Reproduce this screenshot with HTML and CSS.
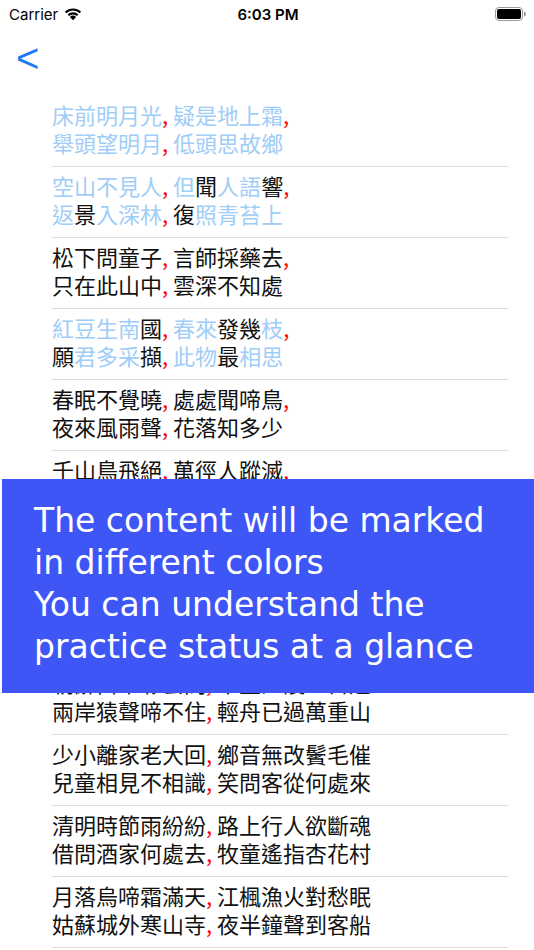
FILE: index.html
```html
<!DOCTYPE html>
<html>
<head>
<meta charset="utf-8">
<link rel="stylesheet" href="styles.css">
</head>
<body>
<div class="screen">
  <div class="status">
    <div class="status-left">
      <span class="carrier">Carrier</span>
      <svg class="wifi" width="20" height="15" viewBox="0 0 20 15">
        <path d="M10 14.2 L6.9 10.9 A4.6 4.6 0 0 1 13.1 10.9 Z" fill="#000"/>
        <path d="M4.6 8.5 A7.8 7.8 0 0 1 15.4 8.5 L13.9 10 A5.7 5.7 0 0 0 6.1 10 Z" fill="#000"/>
        <path d="M1.9 5.7 A11.6 11.6 0 0 1 18.1 5.7 L16.6 7.3 A9.4 9.4 0 0 0 3.4 7.3 Z" fill="#000"/>
      </svg>
    </div>
    <div class="time">6:03 PM</div>
    <div class="status-right">
      <svg class="battery" width="32" height="14" viewBox="0 0 32 14">
        <rect x="0.5" y="0.5" width="27" height="13" rx="3.5" fill="none" stroke="#9a9a9a"/>
        <rect x="2" y="2" width="24" height="10" rx="2" fill="#000"/>
        <path d="M29 4.5 A2 2.5 0 0 1 29 9.5 Z" fill="#9a9a9a"/>
      </svg>
    </div>
  </div>
  <div class="nav"><span class="back">&lt;</span></div>
  <div class="list">
    <div class="row">
      <div class="line"><span class="b">床前明月光</span><span class="c">,</span> <span class="b">疑是地上霜</span><span class="c">,</span></div>
      <div class="line"><span class="b">舉頭望明月</span><span class="c">,</span> <span class="b">低頭思故鄉</span></div>
    </div>
    <div class="row">
      <div class="line"><span class="b">空山不見人</span><span class="c">,</span> <span class="b">但</span>聞<span class="b">人語</span>響<span class="c">,</span></div>
      <div class="line"><span class="b">返</span>景<span class="b">入深林</span><span class="c">,</span> 復<span class="b">照青苔上</span></div>
    </div>
    <div class="row">
      <div class="line">松下問童子<span class="c">,</span> 言師採藥去<span class="c">,</span></div>
      <div class="line">只在此山中<span class="c">,</span> 雲深不知處</div>
    </div>
    <div class="row">
      <div class="line"><span class="b">紅豆生南</span>國<span class="c">,</span> <span class="b">春來</span>發幾<span class="b">枝</span><span class="c">,</span></div>
      <div class="line">願<span class="b">君多采</span>擷<span class="c">,</span> <span class="b">此物</span>最<span class="b">相思</span></div>
    </div>
    <div class="row">
      <div class="line">春眠不覺曉<span class="c">,</span> 處處聞啼鳥<span class="c">,</span></div>
      <div class="line">夜來風雨聲<span class="c">,</span> 花落知多少</div>
    </div>
    <div class="row">
      <div class="line">千山鳥飛絕<span class="c">,</span> 萬徑人蹤滅<span class="c">,</span></div>
      <div class="line">孤舟蓑笠翁<span class="c">,</span> 獨釣寒江雪</div>
    </div>
    <div class="row">
      <div class="line">白日依山盡<span class="c">,</span> 黃河入海流<span class="c">,</span></div>
      <div class="line">欲窮千里目<span class="c">,</span> 更上一層樓</div>
    </div>
    <div class="row">
      <div class="line">獨在異鄉為異客<span class="c">,</span> 每逢佳節倍思親</div>
      <div class="line">遙知兄弟登高處<span class="c">,</span> 遍插茱萸少一人</div>
    </div>
    <div class="row">
      <div class="line">朝辭白帝彩雲間<span class="c">,</span> 千里江陵一日還</div>
      <div class="line">兩岸猿聲啼不住<span class="c">,</span> 輕舟已過萬重山</div>
    </div>
    <div class="row">
      <div class="line">少小離家老大回<span class="c">,</span> 鄉音無改鬢毛催</div>
      <div class="line">兒童相見不相識<span class="c">,</span> 笑問客從何處來</div>
    </div>
    <div class="row">
      <div class="line">清明時節雨紛紛<span class="c">,</span> 路上行人欲斷魂</div>
      <div class="line">借問酒家何處去<span class="c">,</span> 牧童遙指杏花村</div>
    </div>
    <div class="row">
      <div class="line">月落烏啼霜滿天<span class="c">,</span> 江楓漁火對愁眠</div>
      <div class="line">姑蘇城外寒山寺<span class="c">,</span> 夜半鐘聲到客船</div>
    </div>
  </div>
  <div class="overlay">
    <p class="overlay-text">The content will be marked<br>in different colors<br>You can understand the<br>practice status at a glance</p>
  </div>
</div>
</body>
</html>
```

FILE: styles.css
```css
html, body {
  margin: 0;
  padding: 0;
  background: #fff;
}
.screen {
  position: relative;
  width: 534px;
  height: 950px;
  overflow: hidden;
  font-family: "Noto Sans CJK TC", "Noto Sans", sans-serif;
}
.status {
  height: 28px;
  display: flex;
  align-items: center;
  justify-content: space-between;
  padding: 0 7px 0 9px;
  font-family: "Inter", "Liberation Sans", sans-serif;
  font-size: 15px;
  color: #000;
}
.status-left {
  display: flex;
  align-items: center;
  gap: 5px;
  width: 120px;
}
.wifi { margin-top: -2px; }
.time {
  font-weight: 600;
  font-size: 15px;
}
.status-right {
  width: 120px;
  display: flex;
  justify-content: flex-end;
}
.nav {
  height: 68px;
  padding-left: 16px;
  display: flex;
  align-items: flex-start;
}
.back {
  font-family: "Liberation Sans", sans-serif;
  font-size: 40px;
  line-height: 60px;
  color: #1a7cf6;
}
.list {
  margin: 0 26px 0 52px;
}
.row {
  padding: 4px 0 10px;
  border-bottom: 1px solid #dedede;
}
.line {
  font-size: 22px;
  line-height: 28px;
  height: 28px;
  color: #111;
  white-space: nowrap;
}
.b { color: #a0cdf7; }
.c { color: #f00; }
.overlay {
  position: absolute;
  left: 2px;
  right: 0;
  top: 479px;
  height: 214px;
  background: #3f56f7;
  box-sizing: border-box;
  padding: 21px 0 0 32px;
}
.overlay-text {
  margin: 0;
  color: #fff;
  font-family: "DejaVu Sans", sans-serif;
  font-size: 33px;
  line-height: 42px;
}
```
